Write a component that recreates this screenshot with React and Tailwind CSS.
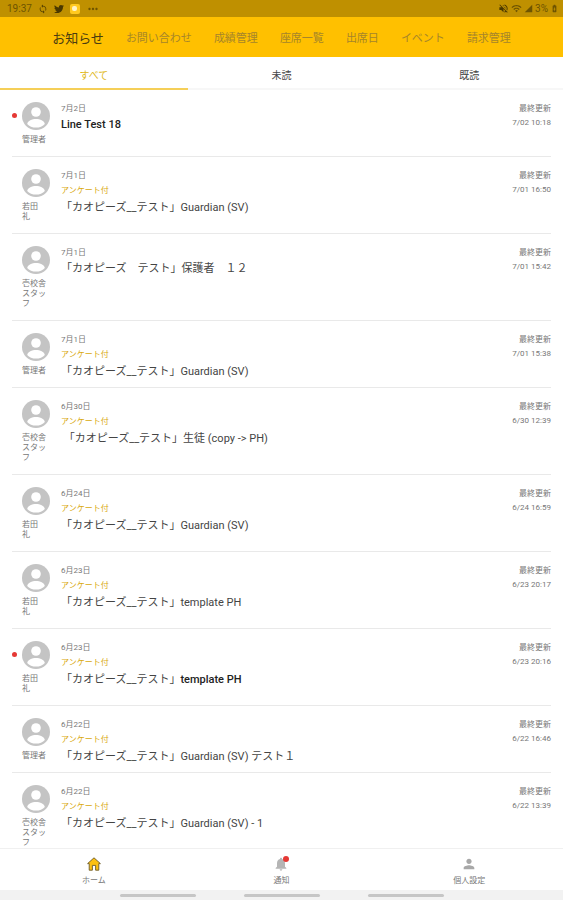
import React, { useState } from 'react';
import {
  MdSync,
  MdVolumeOff,
  MdWifi,
  MdSignalCellular4Bar,
  MdBatteryChargingFull,
  MdMoreHoriz,
  MdNotifications,
  MdPerson,
} from 'react-icons/md';
import { FaTwitter } from 'react-icons/fa';

const MENU = ['お知らせ', 'お問い合わせ', '成績管理', '座席一覧', '出席日', 'イベント', '請求管理'];
const TABS = ['すべて', '未読', '既読'];

const NOTICES = [
  { id: 1, sender: ['管理者'], date: '7月2日', title: 'Line Test 18', updated: '7/02 10:18', unread: true },
  { id: 2, sender: ['若田', '礼'], date: '7月1日', survey: true, group: '「カオピーズ__テスト」', title: 'Guardian (SV)', updated: '7/01 16:50' },
  { id: 3, sender: ['壱校舎', 'スタッ', 'フ'], date: '7月1日', group: '「カオピーズ　テスト」', title: '保護者　１２', updated: '7/01 15:42' },
  { id: 4, sender: ['管理者'], date: '7月1日', survey: true, group: '「カオピーズ__テスト」', title: 'Guardian (SV)', updated: '7/01 15:38' },
  { id: 5, sender: ['壱校舎', 'スタッ', 'フ'], date: '6月30日', survey: true, group: ' 「カオピーズ__テスト」', title: '生徒 (copy -> PH)', updated: '6/30 12:39' },
  { id: 6, sender: ['若田', '礼'], date: '6月24日', survey: true, group: '「カオピーズ__テスト」', title: 'Guardian (SV)', updated: '6/24 16:59' },
  { id: 7, sender: ['若田', '礼'], date: '6月23日', survey: true, group: '「カオピーズ__テスト」', title: 'template PH', updated: '6/23 20:17' },
  { id: 8, sender: ['若田', '礼'], date: '6月23日', survey: true, group: '「カオピーズ__テスト」', title: 'template PH', updated: '6/23 20:16', unread: true },
  { id: 9, sender: ['管理者'], date: '6月22日', survey: true, group: '「カオピーズ__テスト」', title: 'Guardian (SV) テスト１', updated: '6/22 16:46' },
  { id: 10, sender: ['壱校舎', 'スタッ', 'フ'], date: '6月22日', survey: true, group: '「カオピーズ__テスト」', title: 'Guardian (SV) - 1', updated: '6/22 13:39' },
];

function Avatar() {
  return (
    <svg viewBox="0 0 28 28" className="h-7 w-7" aria-hidden="true">
      <circle cx="14" cy="14" r="14" fill="#c4c4c4" />
      <circle cx="14" cy="10" r="4.8" fill="#fff" />
      <path d="M5.2 21.9C6.4 15.2 21.6 15.2 22.8 21.9C19 26.8 9 26.8 5.2 21.9Z" fill="#fff" />
    </svg>
  );
}

function HomeIcon() {
  return (
    <svg viewBox="0 0 16 16" className="h-4 w-4" aria-hidden="true">
      <path
        d="M8 1.8L1.6 7.6H3.2V14.2H6.4V9.4H9.6V14.2H12.8V7.6H14.4L8 1.8Z"
        fill="#fdc010"
        stroke="#6b5a2a"
        strokeWidth="0.9"
        strokeLinejoin="round"
      />
    </svg>
  );
}

function StatusBar() {
  return (
    <div className="flex h-[17px] shrink-0 items-center justify-between bg-[#bf9000] pr-1 pl-[7px] text-[10px] leading-none text-[#6e5400]">
      <div className="flex items-center gap-[6px]">
        <span>19:37</span>
        <MdSync className="h-[10px] w-[10px] text-[#574200]" />
        <FaTwitter className="h-[10px] w-[10px] text-[#4a3800]" />
        <span className="flex h-[10px] w-[10px] items-center justify-center rounded-xs bg-[#ffc91f]">
          <span className="h-[5px] w-[5px] rounded-xs bg-[#fff3c4]" />
        </span>
        <MdMoreHoriz className="h-[14px] w-[14px] text-[#6e5400]" />
      </div>
      <div className="flex items-center gap-[2px]">
        <MdVolumeOff className="h-[11px] w-[11px] text-[#4a3800]" />
        <MdWifi className="h-[11px] w-[11px]" />
        <MdSignalCellular4Bar className="h-[9px] w-[9px]" />
        <span>3%</span>
        <MdBatteryChargingFull className="h-[9px] w-[9px]" />
      </div>
    </div>
  );
}

function NoticeRow({ notice }) {
  return (
    <li className="mx-3 border-b border-[#e9e9e9]">
      <a href="#" className="flex pt-3 pb-[7px]">
        <div className="flex w-[10px] shrink-0 pt-[11px]">
          {notice.unread && <span className="h-[5px] w-[5px] rounded-full bg-[#e53935]" />}
        </div>
        <div className="w-7 shrink-0 pb-1">
          <Avatar />
          <div className="pt-[5px] text-[8px] leading-[10px] text-[#777]">
            {notice.sender.map((line) => (
              <div key={line}>{line}</div>
            ))}
          </div>
        </div>
        <div className="min-w-0 flex-1 pl-[11px]">
          <div className="text-[8px] leading-[14px] text-[#777]">{notice.date}</div>
          {notice.survey && <div className="text-[8px] leading-4 text-[#d9a90c]">アンケート付</div>}
          <div className="truncate text-[11px] leading-[17px] whitespace-pre text-[#444]">
            {notice.group}
            <span className={notice.unread ? 'font-medium text-[#222]' : ''}>{notice.title}</span>
          </div>
        </div>
        <div className="shrink-0 text-right text-[8px] leading-[14px] text-[#777]">
          <div>最終更新</div>
          <div>{notice.updated}</div>
        </div>
      </a>
    </li>
  );
}

function App() {
  const [tab, setTab] = useState('すべて');

  return (
    <div className="flex h-screen flex-col bg-white font-[Roboto,'Noto_Sans_CJK_JP',sans-serif]" lang="ja">
      <StatusBar />

      {/* Main menu */}
      <nav className="flex h-10 shrink-0 items-center justify-center gap-[22px] bg-[#ffc000] pt-1 whitespace-nowrap">
        {MENU.map((item, i) => (
          <a key={item} href="#" className={i === 0 ? 'text-[13px] text-[#4a3c10]' : 'text-[11px] text-[#a6852a]'}>
            {item}
          </a>
        ))}
      </nav>

      {/* Read / unread filter */}
      <div className="grid shrink-0 grid-cols-3">
        {TABS.map((name) => (
          <button
            key={name}
            type="button"
            onClick={() => setTab(name)}
            className={`h-[33px] border-b-2 pt-[5px] text-[10px] ${
              tab === name ? 'border-[#f5cf58] text-[#e0b820]' : 'border-[#f7f7f7] text-[#444]'
            }`}
          >
            {name}
          </button>
        ))}
      </div>

      <ul className="min-h-0 flex-1 overflow-y-auto [scrollbar-width:none]">
        {NOTICES.map((notice) => (
          <NoticeRow key={notice.id} notice={notice} />
        ))}
      </ul>

      {/* Bottom navigation */}
      <nav className="grid h-[42px] shrink-0 grid-cols-3 border-t border-[#f0f0f0] text-[8px] leading-[10px] text-[#777]">
        <a href="#" className="flex flex-col items-center gap-1 pt-[7px]">
          <HomeIcon />
          ホーム
        </a>
        <a href="#" className="flex flex-col items-center gap-1 pt-[7px]">
          <span className="relative">
            <MdNotifications className="h-4 w-4 text-[#b5b5b5]" />
            <span className="absolute top-0 right-0 h-[6px] w-[6px] rounded-full bg-[#e53935]" />
          </span>
          通知
        </a>
        <a href="#" className="flex flex-col items-center gap-1 pt-[7px]">
          <MdPerson className="h-4 w-4 text-[#a8a8a8]" />
          個人設定
        </a>
      </nav>

      {/* System gesture hints */}
      <div className="flex h-[10px] shrink-0 items-center justify-center gap-12 bg-[#f2f2f2]">
        <span className="h-[3px] w-[76px] rounded-full bg-[#c6c6c6]" />
        <span className="h-[3px] w-[76px] rounded-full bg-[#c6c6c6]" />
        <span className="h-[3px] w-[76px] rounded-full bg-[#c6c6c6]" />
      </div>
    </div>
  );
}

export default App;
